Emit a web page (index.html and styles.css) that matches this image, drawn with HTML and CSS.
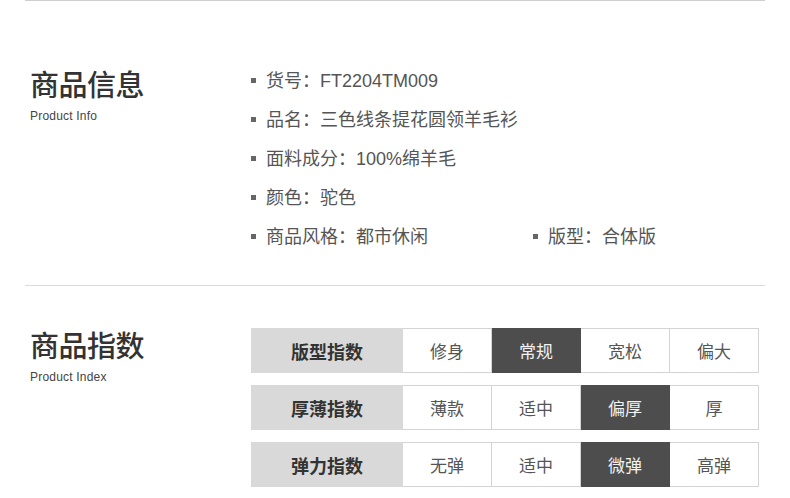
FILE: index.html
```html
<!DOCTYPE html>
<html lang="zh-CN">
<head>
<meta charset="utf-8">
<title>商品信息</title>
<link rel="stylesheet" href="styles.css">
</head>
<body>
<div class="page">
  <section class="info">
    <div class="title">
      <h2 class="title-cn">商品信息</h2>
      <div class="title-en">Product Info</div>
    </div>
    <ul class="facts">
      <li class="fact full">货号：FT2204TM009</li>
      <li class="fact full">品名：三色线条提花圆领羊毛衫</li>
      <li class="fact full">面料成分：100%绵羊毛</li>
      <li class="fact full">颜色：驼色</li>
      <li class="fact">商品风格：都市休闲</li>
      <li class="fact">版型：合体版</li>
    </ul>
  </section>
  <section class="index">
    <div class="title">
      <h2 class="title-cn">商品指数</h2>
      <div class="title-en">Product Index</div>
    </div>
    <div class="table">
      <div class="row">
        <div class="label">版型指数</div>
        <div class="cell">修身</div>
        <div class="cell on">常规</div>
        <div class="cell">宽松</div>
        <div class="cell">偏大</div>
      </div>
      <div class="row">
        <div class="label">厚薄指数</div>
        <div class="cell">薄款</div>
        <div class="cell">适中</div>
        <div class="cell on">偏厚</div>
        <div class="cell">厚</div>
      </div>
      <div class="row">
        <div class="label">弹力指数</div>
        <div class="cell">无弹</div>
        <div class="cell">适中</div>
        <div class="cell on">微弹</div>
        <div class="cell">高弹</div>
      </div>
    </div>
  </section>
</div>
</body>
</html>
```

FILE: styles.css
```css
* { box-sizing: border-box; }
html, body { margin: 0; padding: 0; background: #fff; }
body {
  font-family: "Liberation Sans", "Noto Sans CJK SC", sans-serif;
  color: #555;
}
.page {
  width: 740px;
  margin: 0 25px;
  border-top: 1px solid #cfcfcf;
}
.info {
  display: flex;
  padding-top: 59px;
  padding-bottom: 30px;
  border-bottom: 1px solid #dcdcdc;
}
.index {
  display: flex;
  padding-top: 42px;
}
.title {
  width: 226px;
  padding-left: 5px;
  flex: none;
}
.info .title { padding-top: 6px; }
.index .title { margin-top: -1px; }
.title-cn {
  margin: 0;
  font-family: "Noto Sans CJK SC", sans-serif;
  font-size: 29px;
  line-height: 34px;
  font-weight: 500;
  color: #333;
  letter-spacing: -0.5px;
}
.title-en {
  margin-top: 8px;
  font-size: 12px;
  line-height: 16px;
  color: #444;
  letter-spacing: 0.2px;
}
.facts {
  list-style: none;
  margin: 0;
  padding: 0;
  display: grid;
  grid-template-columns: 282px auto;
  grid-auto-rows: 39px;
}
.fact {
  display: flex;
  align-items: center;
  font-size: 18px;
  color: #555;
  padding-bottom: 2px;
}
.fact.full { grid-column: 1 / -1; }
.fact::before {
  content: "";
  width: 5px;
  height: 5px;
  background: #666;
  margin-right: 10px;
  margin-top: 4px;
  flex: none;
}
.table {
  display: flex;
  flex-direction: column;
  gap: 12px;
}
.row {
  display: grid;
  grid-template-columns: 152px repeat(4, 89px);
  height: 45px;
}
.label {
  background: #d9d9d9;
  display: flex;
  align-items: center;
  justify-content: center;
  font-family: "Noto Sans CJK SC", sans-serif;
  font-size: 18px;
  font-weight: 700;
  color: #333;
}
.cell {
  display: flex;
  align-items: center;
  justify-content: center;
  font-family: "Noto Sans CJK SC", sans-serif;
  font-size: 17px;
  color: #555;
  border-top: 1px solid #d4d4d4;
  border-bottom: 1px solid #d4d4d4;
  border-right: 1px solid #d4d4d4;
}
.cell.on {
  background: #4d4d4d;
  color: #f2f2f2;
  border-color: #4d4d4d;
}
```
